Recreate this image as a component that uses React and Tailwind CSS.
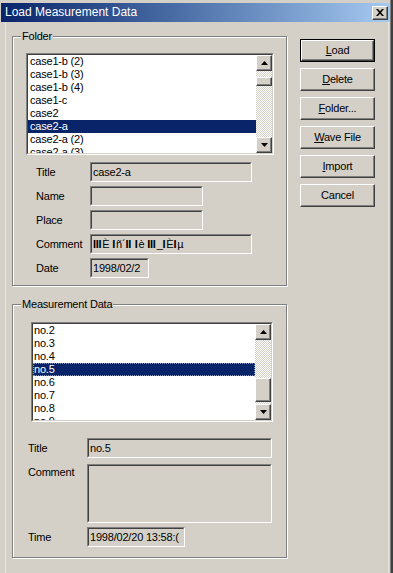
import React from "react";

const raised =
  "border border-t-white border-l-white border-b-[#404040] border-r-[#404040] shadow-[inset_-1px_-1px_0_#808080] bg-[#d4d0c8]";

function Sunken({ className = "", bg = "bg-[#d4d0c8]", children }) {
  return (
    <div className={"border border-t-[#808080] border-l-[#808080] border-b-white border-r-white " + className}>
      <div className={"w-full h-full border border-t-[#404040] border-l-[#404040] border-b-[#d4d0c8] border-r-[#d4d0c8] overflow-hidden " + bg}>
        {children}
      </div>
    </div>
  );
}

function Arrow({ down }) {
  return (
    <svg width="7" height="4" viewBox="0 0 7 4">
      {down ? <polygon points="0,0 7,0 3.5,4" fill="#000" /> : <polygon points="0,4 7,4 3.5,0" fill="#000" />}
    </svg>
  );
}

function ScrollBtn({ down }) {
  return (
    <div className={"w-[16px] h-[16px] flex items-center justify-center " + raised}>
      <Arrow down={down} />
    </div>
  );
}

const track =
  "bg-[repeating-conic-gradient(#ffffff_0_25%,#d4d0c8_0_50%)] bg-[length:2px_2px]";

function ScrollBar({ before, thumb, after }) {
  return (
    <div className="w-[16px] h-full flex flex-col shrink-0">
      <ScrollBtn />
      <div className={track} style={{ height: before }} />
      <div className={"w-[16px] " + raised} style={{ height: thumb }} />
      <div className={track + " flex-1"} style={{ height: after }} />
      <ScrollBtn down />
    </div>
  );
}

function ListBox({ items, selected, className, sb, textPad, focus }) {
  return (
    <Sunken className={className} bg="bg-white">
      <div className="flex h-full">
        <div className="flex-1 overflow-hidden">
          {items.map((it, i) => (
            <div
              key={i}
              className={
                "h-[13px] leading-[13px] whitespace-nowrap " +
                textPad +
                (i === selected
                  ? " bg-[#0a246a] text-white" + (focus ? " outline-1 outline-dotted outline-[#8898c0] -outline-offset-1" : "")
                  : " text-black")
              }
            >
              {it}
            </div>
          ))}
        </div>
        <ScrollBar {...sb} />
      </div>
    </Sunken>
  );
}

function Field({ w, h = "h-[20px]", children }) {
  return (
    <Sunken className={w + " " + h}>
      <div className="px-[1px] leading-[16px] whitespace-nowrap overflow-hidden">{children}</div>
    </Sunken>
  );
}

function Group({ label, className, children }) {
  return (
    <div className={"relative w-[275px] border border-[#808080] shadow-[inset_1px_1px_0_#fff,1px_1px_0_#fff] " + className}>
      <div className="absolute top-[-7px] left-[8px] px-[1px] bg-[#d4d0c8] leading-[13px]">{label}</div>
      {children}
    </div>
  );
}

function Btn({ children, def }) {
  const inner = (
    <div className={"w-full h-full flex items-center justify-center " + raised}>
      <span className="leading-[13px]">{children}</span>
    </div>
  );
  if (def) {
    return <div className="w-[75px] h-[23px] border border-black">{inner}</div>;
  }
  return <div className="w-[75px] h-[23px]">{inner}</div>;
}

function Bars({ n }) {
  return <b className="font-black tracking-[-0.3px] pr-[1px]">{"I".repeat(n)}</b>;
}

export default function App() {
  const folders = ["case1-b (2)", "case1-b (3)", "case1-b (4)", "case1-c", "case2", "case2-a", "case2-a (2)", "case2-a (3)"];
  const meas = ["no.2", "no.3", "no.4", "no.5", "no.6", "no.7", "no.8", "no.9"];
  const u = (s) => <span className="underline">{s}</span>;
  return (
    <div className="w-[393px] h-[573px] bg-[#d4d0c8] overflow-hidden border-r-2 border-r-[#404040] font-['Liberation_Sans',Arial,sans-serif] text-[11px] text-black tracking-[-0.2px]">
      <div className="w-full h-full border-r border-r-[#808080] pt-[3px] pl-[1px] flex flex-col">
        <div className="h-[19px] w-[389px] bg-gradient-to-r from-[#0a246a] to-[#a6caf0] flex items-center justify-between pl-[4px] pr-[2px]">
          <span className="text-white text-[12px] leading-[19px] tracking-normal">Load Measurement Data</span>
          <div className={"w-[16px] h-[14px] flex items-center justify-center " + raised}>
            <svg width="8" height="7" viewBox="0 0 8 7">
              <path d="M0 0 L2 0 L4 2.2 L6 0 L8 0 L5 3.5 L8 7 L6 7 L4 4.8 L2 7 L0 7 L3 3.5 Z" fill="#000" />
            </svg>
          </div>
        </div>
        <div className="flex-1 ml-[4px] mr-[1px] border-l border-r border-[#e6e4de] flex">
          <div className="pl-[6px] pt-[14px] flex flex-col">
            <Group label="Folder" className="h-[250px]">
              <div className="pl-[13px] pt-[16px]">
                <ListBox
                  items={folders}
                  selected={5}
                  className="w-[248px] h-[102px]"
                  textPad="pl-[2px]"
                  sb={{ before: 6, thumb: 9, after: 51 }}
                />
              </div>
              <div className="pl-[23px] pt-[7px] flex flex-col gap-[4px]">
                {[
                  ["Title", "w-[162px]", "case2-a"],
                  ["Name", "w-[113px]", ""],
                  ["Place", "w-[113px]", ""],
                  [
                    "Comment",
                    "w-[162px]",
                    <span>
                      <Bars n={3} />È <Bars n={1} />ñ´<Bars n={2} /> <Bars n={1} />è <Bars n={3} />_<Bars n={1} />È<Bars n={1} />µ
                    </span>,
                  ],
                  ["Date", "w-[59px]", "1998/02/2"],
                ].map(([l, w, v]) => (
                  <div key={l} className="flex items-center">
                    <div className="w-[54px] leading-[13px] pt-[1px]">{l}</div>
                    <Field w={w}>{v}</Field>
                  </div>
                ))}
              </div>
            </Group>
            <Group label="Measurement Data" className="h-[254px] mt-[18px]">
              <div className="pl-[18px] pt-[17px]">
                <ListBox
                  items={meas}
                  selected={3}
                  focus
                  className="w-[242px] h-[100px]"
                  textPad="pl-[1px]"
                  sb={{ before: 38, thumb: 24, after: 2 }}
                />
              </div>
              <div className="pl-[15px] pt-[16px] flex flex-col">
                <div className="flex items-center">
                  <div className="w-[59px] leading-[13px]">Title</div>
                  <Field w="w-[185px]">no.5</Field>
                </div>
                <div className="flex items-start mt-[6px]">
                  <div className="w-[59px] leading-[13px] pt-[2px]">Comment</div>
                  <Sunken className="w-[185px] h-[59px]" />
                </div>
                <div className="flex items-center mt-[4px]">
                  <div className="w-[59px] leading-[13px] pt-[1px]">Time</div>
                  <Field w="w-[98px]">1998/02/20 13:58:(</Field>
                </div>
              </div>
            </Group>
          </div>
          <div className="pl-[13px] pt-[17px] flex flex-col gap-[6px]">
            <Btn def>{u("L")}oad</Btn>
            <Btn>{u("D")}elete</Btn>
            <Btn>{u("F")}older...</Btn>
            <Btn>{u("W")}ave File</Btn>
            <Btn>{u("I")}mport</Btn>
            <Btn>Cancel</Btn>
          </div>
        </div>
      </div>
    </div>
  );
}
